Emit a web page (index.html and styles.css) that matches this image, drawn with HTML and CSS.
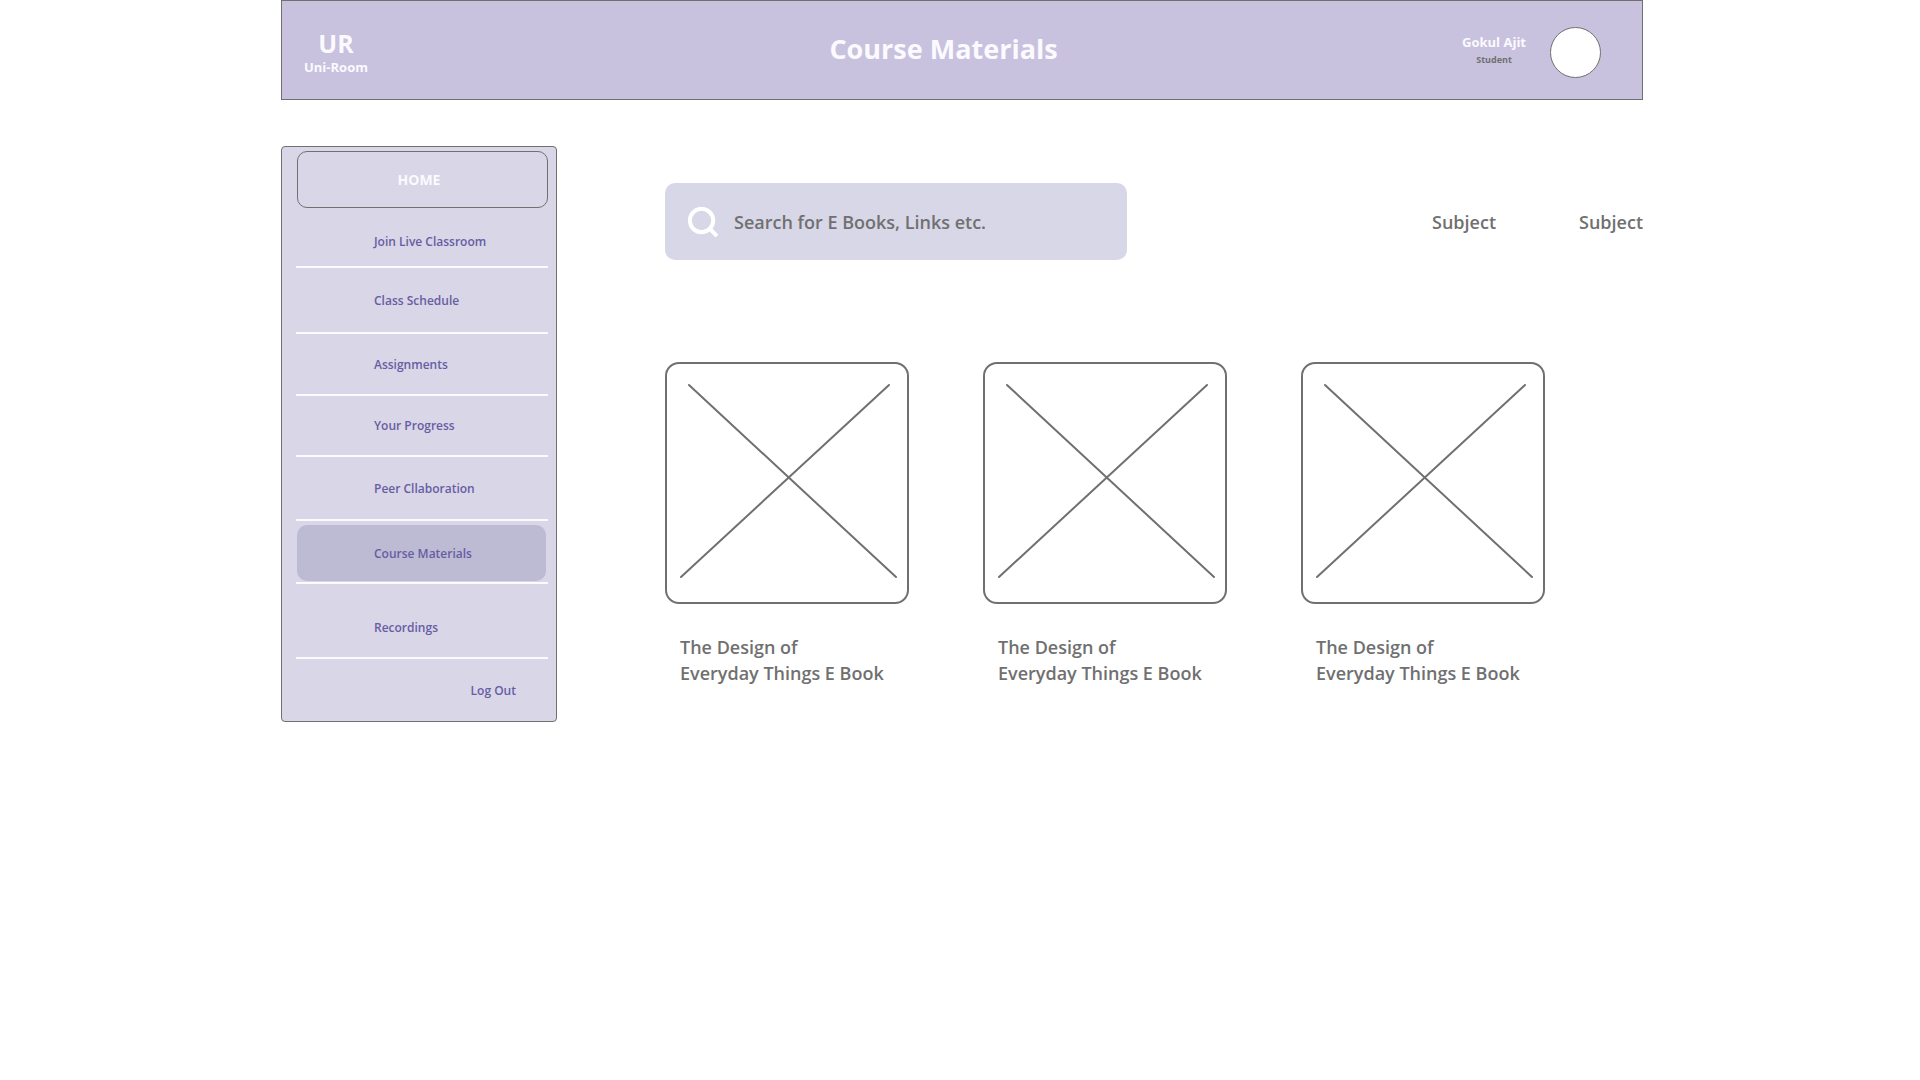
FILE: index.html
```
<!DOCTYPE html>
<html lang="en">
<head>
  <meta charset="utf-8">
  <title>Course Materials</title>
  <link rel="stylesheet" href="styles.css">
</head>
<body>
  <header class="topbar">
    <a class="brand" href="#"><span class="brand-mark">UR</span><span class="brand-name">Uni-Room</span></a>
    <h1 class="page-title">Course Materials</h1>
    <div class="user">
      <div class="user-text"><span class="user-name">Gokul Ajit</span><span class="user-role">Student</span></div>
      <span class="avatar"></span>
    </div>
  </header>

  <div class="layout">
    <nav class="sidebar">
      <a class="home" href="#">HOME</a>
      <ul class="menu">
        <li class="menu-first"><a href="#">Join Live Classroom</a></li>
        <li><a href="#">Class Schedule</a></li>
        <li><a href="#">Assignments</a></li>
        <li><a href="#">Your Progress</a></li>
        <li><a href="#">Peer Cllaboration</a></li>
        <li><a class="active" href="#" aria-current="page">Course Materials</a></li>
        <li class="menu-last"><a href="#">Recordings</a></li>
      </ul>
      <a class="logout" href="#">Log Out</a>
    </nav>

    <main class="content">
      <div class="toolbar">
        <label class="search">
          <svg class="search-icon" viewBox="0 0 30 30" aria-hidden="true"><circle cx="13.5" cy="13.5" r="11.7"/><path d="M21 21l8 8"/></svg>
          <input type="search" placeholder="Search for E Books, Links etc." aria-label="Search for E Books, Links etc.">
        </label>
        <div class="filters">
          <button type="button">Subject</button>
          <button type="button">Subject</button>
        </div>
      </div>

      <div class="books">
        <article class="book">
          <svg class="cover" viewBox="0 0 244 242" aria-hidden="true"><rect x="1" y="1" width="242" height="240" rx="13"/><path d="M24 23L231 215M224 23L16 215"/></svg>
          <h2>The Design of<br>Everyday Things E Book</h2>
        </article>
        <article class="book">
          <svg class="cover" viewBox="0 0 244 242" aria-hidden="true"><rect x="1" y="1" width="242" height="240" rx="13"/><path d="M24 23L231 215M224 23L16 215"/></svg>
          <h2>The Design of<br>Everyday Things E Book</h2>
        </article>
        <article class="book">
          <svg class="cover" viewBox="0 0 244 242" aria-hidden="true"><rect x="1" y="1" width="242" height="240" rx="13"/><path d="M24 23L231 215M224 23L16 215"/></svg>
          <h2>The Design of<br>Everyday Things E Book</h2>
        </article>
      </div>
    </main>
  </div>
</body>
</html>
```
FILE: styles.css
```
* {
  box-sizing: border-box;
}

body {
  margin: 0;
  padding: 0 277px 0 281px;
  background: #fff;
  color: #707070;
  font-family: "Open Sans", "Noto Sans", sans-serif;
}

a {
  color: inherit;
  text-decoration: none;
}

.topbar {
  display: grid;
  grid-template-columns: 1fr auto 1fr;
  align-items: center;
  height: 100px;
  padding: 0 41px 0 22px;
  border: 1px solid #707070;
  background: #c8c2df;
  color: #fbfafe;
  font-weight: 700;
}

.brand,
.user-text {
  display: flex;
  flex-direction: column;
  align-items: center;
}

.brand {
  justify-self: start;
  padding-top: 6px;
}

.brand-mark {
  font-size: 25px;
  line-height: 28px;
}

.brand-name {
  font-size: 13px;
  line-height: 20px;
}

.page-title {
  margin: 0;
  padding: 0 18px 2px 0;
  font-size: 27px;
  line-height: 40px;
}

.user {
  display: flex;
  justify-self: end;
  align-items: center;
  gap: 24px;
  padding-top: 5px;
}

.user-text {
  padding-bottom: 6px;
}

.user-name {
  font-size: 13px;
  line-height: 20px;
}

.user-role {
  color: #707070;
  font-size: 9px;
  line-height: 16px;
}

.avatar {
  width: 51px;
  height: 51px;
  border: 1px solid #707070;
  border-radius: 50%;
  background: #fff;
}

.layout {
  display: flex;
  align-items: flex-start;
  gap: 108px;
  padding-top: 46px;
}

.sidebar {
  flex: 0 0 276px;
  padding: 4px 8px 0 14px;
  border: 1px solid #707070;
  border-radius: 4px;
  background: #d9d6e7;
  color: #675da3;
  font-size: 12px;
  font-weight: 600;
}

.home {
  display: flex;
  align-items: center;
  justify-content: center;
  height: 57px;
  margin-left: 1px;
  padding-right: 7px;
  border: 1px solid #707070;
  border-radius: 10px;
  color: #fbfafe;
  font-size: 14px;
  font-weight: 700;
}

.menu {
  display: grid;
  grid-template-rows: 60px 66px 62px 61px 64px 63px 75px;
  margin: 0;
  padding: 0;
  list-style: none;
}

.menu li {
  display: flex;
  border-bottom: 2px solid #fbfafe;
}

.menu a {
  display: flex;
  flex: 1;
  align-items: center;
  padding-left: 78px;
}

.menu .menu-first {
  padding-top: 8px;
}

.menu .menu-last {
  padding-top: 14px;
}

.menu .active {
  margin: 4px 2px 1px 1px;
  padding-left: 77px;
  border-radius: 10px;
  background: #bdbad3;
}

.logout {
  display: block;
  padding: 22px 32px 20px 0;
  line-height: 20px;
  text-align: right;
}

.content {
  flex: 1;
  padding-top: 37px;
}

.toolbar {
  display: flex;
  align-items: center;
  justify-content: space-between;
}

.search {
  display: flex;
  align-items: center;
  gap: 16px;
  width: 462px;
  height: 77px;
  padding: 0 23px;
  border-radius: 10px;
  background: #d8d7e7;
}

.search-icon {
  flex: none;
  width: 30px;
  height: 30px;
  fill: none;
  stroke: #fff;
  stroke-width: 4;
}

.search input {
  flex: 1;
  min-width: 0;
  padding: 0;
  border: 0;
  outline: 0;
  background: none;
  color: #707070;
  font: 600 18px/26px "Open Sans", "Noto Sans", sans-serif;
}

.search input::placeholder {
  color: #707070;
  opacity: 1;
}

.filters {
  display: flex;
  gap: 83px;
}

.filters button {
  padding: 0;
  border: 0;
  background: none;
  color: #707070;
  font: 600 18px/26px "Open Sans", "Noto Sans", sans-serif;
}

.books {
  display: grid;
  grid-template-columns: repeat(auto-fill, 244px);
  gap: 74px;
  padding-top: 102px;
}

.cover {
  display: block;
  width: 100%;
  fill: none;
  stroke: #707070;
  stroke-width: 2;
  stroke-linecap: round;
}

.book h2 {
  margin: 30px 0 0 15px;
  font-size: 18px;
  font-weight: 600;
  line-height: 26px;
  white-space: nowrap;
}
```
